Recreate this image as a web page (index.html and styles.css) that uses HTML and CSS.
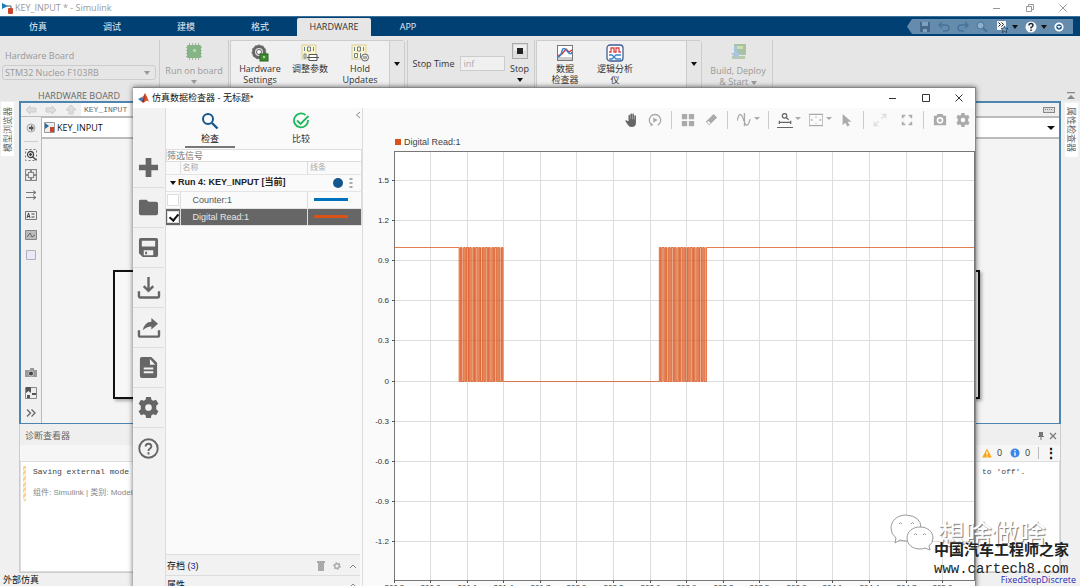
FILE: index.html
```
<!DOCTYPE html>
<html lang="zh-CN">
    <head>
        <meta charset="UTF-8" />
        <meta name="viewport" content="width=device-width, initial-scale=1.0" />
        <title>KEY_INPUT * - Simulink</title>
        <link rel="stylesheet" href="styles.css">
    </head>

    <body>
        <div class="app">
            <!-- 标题栏 -->
            <header class="titlebar">
                <svg class="logo" width="12" height="12" viewBox="0 0 12 12"><path d="M0 1l6 3-6 3z" fill="#1a7fb8" /><path d="M5 4h4v3" stroke="#555" fill="none" /><rect x="6" y="6" width="5" height="6" rx="1" fill="#c8452b" /></svg>
                <span>KEY_INPUT * - Simulink</span>
                <div class="win-btns">
                    <button aria-label="最小化"><svg width="8" height="8"><path d="M0 4.5h7" /></svg></button>
                    <button aria-label="还原"><svg width="8" height="8"><path d="M.5 2.5h5v5h-5zM2.500 2V.5h5v5H6" /></svg></button>
                    <button aria-label="关闭"><svg width="8" height="8"><path d="M.5.5l7 7M7.500.5l-7 7" /></svg></button>
                </div>
            </header>

            <nav class="tabs">
                <a href="#">仿真</a>
                <a href="#">调试</a>
                <a href="#">建模</a>
                <a href="#">格式</a>
                <a href="#" class="active">HARDWARE</a>
                <a href="#">APP</a>
                <div class="quick">
                    <svg width="12" height="12" viewBox="0 0 12 12"><path d="M1 1h10v10H1z" fill="#45698c" /><path d="M3 1h6v4H3zM4 8h4v3H4z" fill="#7f9fbb" /></svg>
                    <svg width="12" height="12" viewBox="0 0 12 12"><path d="M4 1L1 4l3 3M1 4h7q3 0 3 3t-4 3H5" fill="none" stroke="#46739c" stroke-width="1.500" /></svg>
                    <svg width="12" height="12" viewBox="0 0 12 12"><path d="M8 1l3 3-3 3M11 4H4Q1 4 1 7t4 3h2" fill="none" stroke="#46739c" stroke-width="1.500" /></svg>
                    <svg width="12" height="12" viewBox="0 0 12 12"><circle cx="4.500" cy="4.500" r="3.500" fill="#8fb0cb" stroke="#46739c" /><path d="M7 7l4 4" stroke="#46739c" stroke-width="2" /></svg>
                    <span class="drop"><svg width="12" height="12" viewBox="0 0 12 12"><path d="M1 0h9v9H1z" fill="#f2f2f2" /><path d="M2.500 1.500l2 2-2 2M5.500 1.500l2 2-2 2" fill="none" stroke="#222" /><path d="M8.500 5l1 2.200 2.500.3-1.800 1.600.5 2.400-2.200-1.200-2.200 1.200.5-2.400L5 7.500l2.500-.3z" fill="#6f9cc4" stroke="#123" stroke-width=".6" /></svg><i class="caret"></i></span>
                    <span class="drop"><svg width="12" height="12" viewBox="0 0 12 12"><circle cx="6" cy="6" r="5.500" fill="#f4f6f8" /><path d="M4 4.500Q4 2.500 6 2.500t2 2Q8 5.500 6 6.500V7.500M6 8.500v1.500" fill="none" stroke="#123" stroke-width="1.400" /></svg><i class="caret"></i></span>
                    <svg width="10" height="10" viewBox="0 0 10 10"><circle cx="5" cy="5" r="3.700" fill="#1b5d92" stroke="#fff" stroke-width="1.800" /><path d="M3 4h4L5 6.500z" fill="#fff" /></svg>
                </div>
            </nav>

            <!-- 工具条 -->
            <section class="strip">
                <div class="board">
                    <label for="board">Hardware Board</label>
                    <div class="select-wrap">
                        <select id="board" disabled><option>STM32 Nucleo F103RB</option></select>
                        <i class="caret"></i>
                    </div>
                    <h4>HARDWARE BOARD</h4>
                </div>
                <div class="group run">
                    <button class="tool" disabled>
                        <svg width="18" height="18" viewBox="0 0 18 18"><path d="M1 4.500h16M1 7.500h16M1 10.500h16M1 13.500h16M4.500 0v17M7.500 0v17M10.500 0v17M13.500 0v17" stroke="#a5b6a2" /><rect x="2" y="2" width="14" height="13" rx="1" fill="#86b487" /><rect x="8" y="6" width="3" height="3" fill="#b7d6a8" /></svg>
                        <span>Run on board</span><i class="caret"></i>
                    </button>
                </div>
                <div class="gallery hw">
                    <button class="tool">
                        <svg width="18" height="18" viewBox="0 0 18 18"><circle cx="8" cy="8" r="5.500" fill="#ddd" stroke="#666" stroke-width="3" /><circle cx="8" cy="8" r="7" fill="none" stroke="#777" stroke-dasharray="2 2" /><circle cx="8" cy="8" r="2.500" fill="#fff" stroke="#666" /><rect x="9" y="10" width="8" height="7" fill="#3e8b33" stroke="#28651f" /><path d="M12 12h2v2h-2z" fill="#a9d59a" /></svg>
                        <span>Hardware<br>Settings</span>
                    </button>
                    <button class="tool">
                        <svg width="18" height="18" viewBox="0 0 18 18"><rect x="1" y="1" width="14" height="14" fill="#fcf5c9" stroke="#d9cf9a" /><path d="M3.500 3v4M6.500 3h3v4h-3zM12.500 3v4M3 10h2v4H3z" fill="none" stroke="#6b7f96" /><path d="M6 13.500h12M8 10.500h8v6H8z" fill="#fff" stroke="#555" /></svg>
                        <span>调整参数</span>
                    </button>
                    <button class="tool">
                        <svg width="18" height="18" viewBox="0 0 18 18"><rect x="1" y="1" width="14" height="14" fill="#fcf5c9" stroke="#d9cf9a" /><path d="M3.500 3v4M6.500 3h3v4h-3zM12.500 3v4M3.500 9.500h3v4h-3zM9.500 9v5" fill="none" stroke="#6b7f96" /><circle cx="14" cy="13.500" r="3.500" fill="#eee" stroke="#666" /><path d="M13 12v3M15 12v3" stroke="#666" /></svg>
                        <span>Hold<br>Updates</span>
                    </button>
                    <button class="more" aria-label="更多"><i class="caret"></i></button>
                </div>
                <div class="group stop">
                    <label for="stopTime">Stop Time</label>
                    <input id="stopTime" type="text" value="inf" disabled>
                    <button class="tool">
                        <svg width="16" height="16" viewBox="0 0 16 16"><rect x=".5" y=".5" width="15" height="15" fill="#ddd" stroke="#aaa" /><rect x="2" y="2" width="12" height="6" fill="#eee" /><rect x="5" y="5" width="6" height="6" fill="#222" /></svg>
                        <span>Stop</span><i class="caret"></i>
                    </button>
                </div>
                <div class="gallery review">
                    <button class="tool">
                        <svg width="18" height="18" viewBox="0 0 18 18"><rect x="1.500" y="1.500" width="15" height="15" fill="#fff" stroke="#777" /><path d="M2 13h14v3H2z" fill="#ccc" /><path d="M2 12l4-2 4-5 3 3 3-2" fill="none" stroke="#d33" stroke-width="1.500" /><path d="M2 13q3-1 4-6t5 0 5 1" fill="none" stroke="#3a86c8" stroke-width="1.500" /></svg>
                        <span>数据<br>检查器</span>
                    </button>
                    <button class="tool">
                        <svg width="18" height="18" viewBox="0 0 18 18"><rect x="1" y="1" width="16" height="16" rx="3" fill="#fff" stroke="#3f5f95" stroke-width="1.300" /><path d="M3 8h2V4h3v4h2V4h3v4h2" fill="none" stroke="#e04343" stroke-width="1.300" /><path d="M3 11h3l4 4h5M3 15h3l4-4h5" fill="none" stroke="#3a86c8" stroke-width="1.300" /></svg>
                        <span>逻辑分析<br>仪</span>
                    </button>
                    <button class="more" aria-label="更多"><i class="caret"></i></button>
                </div>
                <div class="group deploy">
                    <button class="tool" disabled>
                        <svg width="18" height="18" viewBox="0 0 18 18"><rect x="5" y="1" width="12" height="11" rx="1" fill="#a5c3a2" /><path d="M8 3h6v3H8z" fill="#cfdcae" /><path d="M3 13h13v3H3z" fill="#b9c9ac" /><path d="M8 3H5v7H2l5 6 5-6H8z" fill="#a9c4dc" /></svg>
                        <span>Build, Deploy<br>&amp; Start <i class="caret"></i></span>
                    </button>
                </div>
                <svg class="collapse" width="10" height="8" viewBox="0 0 10 8"><path d="M1 .5h8" stroke="#888" stroke-width="1.500" /><path d="M1 7h8L5 3z" fill="#888" /></svg>
            </section>

            <!-- 编辑器 -->
            <main class="work">
                <aside class="side-tab left"><button>模型浏览器</button></aside>
                <div class="center">
                    <section class="editor">
                        <div class="nav-row">
                            <svg width="12" height="10" viewBox="0 0 12 10"><path d="M5 1v2h6v4H5v2L1 5z" /></svg>
                            <svg width="12" height="10" viewBox="0 0 12 10"><path d="M7 1v2H1v4h6v2l4-4z" /></svg>
                            <svg width="12" height="10" viewBox="0 0 12 10"><path d="M6 0l5 5H8v4H4V5H1z" /></svg>
                            <a href="#">KEY_INPUT</a>
                            <svg class="keyboard" width="12" height="8" viewBox="0 0 12 8"><rect x=".5" y="1.500" width="11" height="5" /><path d="M2 3.500h8" stroke-dasharray="1 1" /></svg>
                        </div>
                        <div class="editor-body">
                            <div class="palette">
                                <svg width="12" height="12" viewBox="0 0 12 12"><circle cx="6" cy="6" r="4" fill="#ddd" stroke="#aaa" /><path d="M4 5h2V3l3 3-3 3V7H4z" fill="#555" /></svg>
                                <hr>
                                <svg width="12" height="12" viewBox="0 0 12 12"><path d="M.5.5h11v11H.5z" fill="none" stroke="#777" stroke-dasharray="2 2" /><circle cx="5.500" cy="5.500" r="3" fill="#fff" stroke="#444" stroke-width="1.300" /><path d="M4 5.500h3M5.500 4v3M8 8l3 3" stroke="#444" stroke-width="1.300" /></svg>
                                <svg width="12" height="12" viewBox="0 0 12 12"><path d="M0 0h12v12H0z" fill="#888" /><path d="M2 5V2h3M7 2h3v3M10 7v3H7M5 10H2V7" fill="none" stroke="#fff" stroke-width="1.500" /><path d="M4 4h4v4H4z" fill="#eee" /></svg>
                                <svg width="12" height="12" viewBox="0 0 12 12"><path d="M1 3.500h10M1 8.500h10M8 1.500l3 2-3 2M8 6.500l3 2-3 2" fill="none" stroke="#777" /></svg>
                                <svg width="12" height="12" viewBox="0 0 12 12"><path d="M.5 2.500h11v8H.5z" fill="#eee" stroke="#777" /><path d="M2 9l1.500-5L5 9M2.500 7.500h2M6.500 5h3M6.500 8h3" fill="none" stroke="#444" /></svg>
                                <svg width="12" height="12" viewBox="0 0 12 12"><path d="M.5 1.500h11v9H.5z" fill="#bbb" stroke="#888" /><path d="M2 8l3-4 2 4 3-2" fill="none" stroke="#666" /></svg>
                                <svg width="12" height="12" viewBox="0 0 12 12"><path d="M1.500 1.500h9v9h-9z" fill="#e9e9f8" stroke="#b0b0bd" /></svg>
                                <div class="spacer"></div>
                                <svg width="12" height="12" viewBox="0 0 12 12"><path d="M0 3h5V1h4v2h3v7H0z" fill="#999" /><circle cx="6" cy="6.500" r="2.500" fill="#444" stroke="#ccc" /></svg>
                                <svg width="12" height="12" viewBox="0 0 12 12"><path d="M.5.5h11v11H.5z" fill="#eee" stroke="#888" /><path d="M1 0h5v6L3.500 4 1 6zM7 6h4v2H7zM2 8h3v3H2z" fill="#555" /></svg>
                                <svg width="12" height="12" viewBox="0 0 12 12"><path d="M2 2.500l3.500 3.500L2 9.500M6.500 2.500L10 6 6.500 9.500" fill="none" stroke="#666" stroke-width="1.300" /></svg>
                            </div>
                            <div class="model">
                                <div class="crumb">
                                    <svg width="11" height="11" viewBox="0 0 11 11"><path d="M.5.5h10v10H.5z" fill="#eee" stroke="#999" /><path d="M1 1l4 3-4 3z" fill="#1a6fae" /><path d="M6 5h4v5H6z" fill="#c8452b" /></svg>
                                    <span>KEY_INPUT</span>
                                    <i class="caret"></i>
                                </div>
                                <div class="canvas"><div class="block"></div></div>
                            </div>
                        </div>
                    </section>
                    <section class="diag">
                        <div class="diag-head">
                            <span>诊断查看器</span>
                            <svg width="8" height="8" viewBox="0 0 8 8"><path d="M2 0h4v4H2zM1 4h6v1H1zM3.500 5h1v3h-1z" fill="#777" /></svg>
                            <svg width="8" height="8" viewBox="0 0 8 8"><path d="M1 1l6 6M7 1L1 7" stroke="#777" stroke-width="1.200" /></svg>
                        </div>
                        <div class="diag-count">
                            <svg width="10" height="10" viewBox="0 0 10 10"><path d="M5 .5L9.800 9.500H.2z" fill="#f9a51a" /><path d="M5 3.500v3M5 7.500v1" stroke="#fff" stroke-width="1.300" /></svg><span>0</span>
                            <svg width="10" height="10" viewBox="0 0 10 10"><circle cx="5" cy="5" r="4.500" fill="#3b86ea" /><path d="M5 2v1.200M5 4.200v3.500" stroke="#fff" stroke-width="1.400" /></svg><span>0</span>
                            <hr>
                            <b>&#8942;</b>
                        </div>
                        <div class="diag-box">
                            <p class="msg"><span>Saving external mode s</span><span>to 'off'.</span></p>
                            <p class="src">组件: Simulink | 类别: Model</p>
                        </div>
                    </section>
                </div>
                <aside class="side-tab right"><button>属性检查器</button></aside>
            </main>

            <footer class="status"><span>外部仿真</span><a href="#">FixedStepDiscrete</a></footer>
        </div>

        <!-- 仿真数据检查器 窗口 -->
        <div class="dialog">
            <div class="dlg-title">
                <svg width="12" height="10" viewBox="0 0 12 10"><path d="M0 6l4-2 2 3-2 2z" fill="#3d7bb5" /><path d="M4 4q2-1 3-4 2 3 4 9-2-2-3-1T5 10L4 9l2-2z" fill="#d4512a" /><path d="M7 0q-1 5-3 9l2 0z" fill="#8a2c1c" /></svg>
                <span>仿真数据检查器 - 无标题*</span>
                <div class="win-btns dark">
                    <button aria-label="最小化"><svg width="8" height="8"><path d="M0 4.500h7" /></svg></button>
                    <button aria-label="最大化"><svg width="8" height="8"><path d="M.5.5h7v7h-7z" /></svg></button>
                    <button aria-label="关闭"><svg width="8" height="8"><path d="M.5.5l7 7M7.500.5l-7 7" /></svg></button>
                </div>
            </div>
            <div class="dlg-body">
                <div class="rail">
                    <button aria-label="新建"><svg viewBox="0 0 22 22"><path d="M8 1h6v7h7v6h-7v7H8v-7H1V8h7z" /></svg></button>
                    <button aria-label="打开"><svg viewBox="0 0 22 22"><path d="M2 3h7l2 2h8q2 0 2 2v10q0 2-2 2H3q-2 0-2-2V5q0-2 1-2z" /></svg></button>
                    <button aria-label="保存"><svg viewBox="0 0 22 22"><path d="M3 1h16q2 0 2 2v16q0 2-2 2H5l-4-4V3q0-2 2-2zM4 4v6h14V4zM6 14v5h10v-5zM7.500 15.500h2v2.500h-2z" fill-rule="evenodd" /></svg></button>
                    <button aria-label="导入"><svg viewBox="0 0 22 22"><path d="M11 0v14M6 9.500l5 5 5-5M1 15v5q0 1.500 1.500 1.500h18q1.500 0 1.500-1.500v-5" class="line" /></svg></button>
                    <button aria-label="导出"><svg viewBox="0 0 22 22"><path d="M1 14v5q0 1.500 1.500 1.500h18q1.500 0 1.500-1.500v-5" class="line" /><path d="M5 14Q7 5 14 5V1l7 6-7 6V10Q9 10 5 14z" /></svg></button>
                    <button aria-label="报告"><svg viewBox="0 0 22 22"><path d="M4 0h10l6 6v14q0 2-2 2H4q-2 0-2-2V2q0-2 2-2zM12.500 2v6H18zM6 11v2h10v-2zM6 15v2h10v-2z" fill-rule="evenodd" /></svg></button>
                    <button aria-label="设置"><svg viewBox="0 0 22 22"><path d="M8.500 0h5l.6 3 1.900 1 2.900-1.100 2.500 4.300-2.300 2v3.600l2.300 2-2.500 4.300L16 18l-1.900 1-.6 3h-5l-.6-3L6 18l-2.900 1.100-2.500-4.300 2.300-2V9.200l-2.300-2 2.500-4.300L6 4l1.900-1zM11 7.500a3.500 3.500 0 1 0 0 7 3.500 3.500 0 0 0 0-7z" fill-rule="evenodd" /></svg></button>
                    <button aria-label="帮助"><svg viewBox="0 0 22 22"><circle cx="11" cy="11" r="9.700" fill="none" class="line thin" /><path d="M8 9Q8 6 11 6t3 3q0 1.500-2 2.500-1 .7-1 2M11 15v2.200" class="line thin" /></svg></button>
                </div>

                <div class="panel">
                    <div class="panel-tabs">
                        <button class="on"><svg width="18" height="18" viewBox="0 0 18 18"><circle cx="7" cy="7" r="5" fill="none" stroke="#15578c" stroke-width="2" /><path d="M11 11l5.500 5.500" stroke="#15578c" stroke-width="2.400" /></svg><span>检查</span></button>
                        <button><svg width="18" height="18" viewBox="0 0 18 18"><path d="M13.500 3a7 7 0 1 0 2.500 5" fill="none" stroke="#1cb85c" stroke-width="1.800" /><path d="M5 8.500l3.500 3.500L16.500 4" fill="none" stroke="#1cb85c" stroke-width="1.800" /></svg><span>比较</span></button>
                        <svg class="chev" width="6" height="8" viewBox="0 0 6 8"><path d="M5 1L1.500 4 5 7" fill="none" stroke="#888" /></svg>
                    </div>
                    <input class="filter" type="text" placeholder="筛选信号" aria-label="筛选信号">
                    <table class="signals">
                        <colgroup><col class="c-check"><col><col class="c-line"></colgroup>
                        <thead>
                            <tr><th></th><th>名称</th><th>线条</th></tr>
                        </thead>
                        <tbody>
                            <tr class="run-row">
                                <td colspan="3"><div><i class="caret"></i><b>Run 4: KEY_INPUT [当前]</b><i class="dot"></i><svg width="4" height="12" viewBox="0 0 4 12"><path d="M.5 1h3v2h-3zM.5 5h3v2h-3zM.5 9h3v2h-3z" fill="#aaa" /></svg></div></td>
                            </tr>
                            <tr>
                                <td><input type="checkbox" id="s1"></td>
                                <td><label for="s1">Counter:1</label></td>
                                <td><i class="swatch blue"></i></td>
                            </tr>
                            <tr class="picked">
                                <td><input type="checkbox" id="s2" checked></td>
                                <td><label for="s2">Digital Read:1</label></td>
                                <td><i class="swatch orange"></i></td>
                            </tr>
                        </tbody>
                    </table>
                    <div class="archive">
                        <span>存档 (<a href="#">3</a>)</span>
                        <svg width="8" height="10" viewBox="0 0 8 10"><path d="M0 0h8v2H0zM1 2h6v8H1z" fill="#aaa" /></svg>
                        <svg width="8" height="8" viewBox="0 0 8 8"><circle cx="4" cy="4" r="2.300" fill="none" stroke="#aaa" stroke-width="1.500" /><circle cx="4" cy="4" r="3.500" fill="none" stroke="#aaa" stroke-dasharray="1.600 2" /></svg>
                        <svg width="8" height="6" viewBox="0 0 8 6"><path d="M1 5l3-3 3 3" fill="none" stroke="#888" /></svg>
                    </div>
                    <div class="archive props">
                        <span>属性</span>
                        <svg width="8" height="6" viewBox="0 0 8 6"><path d="M1 5l3-3 3 3" fill="none" stroke="#888" /></svg>
                    </div>
                </div>

                <div class="plot">
                    <div class="plot-tools">
                        <button class="strong" aria-label="平移"><svg viewBox="0 0 16 16"><path d="M4 9V3q0-1 .8-1t.9 1v4h.4V1.500Q6 .5 7 .5t1 1V7h.4V1.500q0-1 .9-1t.9 1V7.500h.5V3.500q0-1 .9-1t.9 1V11q0 5-5 5-3 0-4.500-3L.5 9.500Q0 8.500 1 8.300t1.700.7z" /></svg></button>
                        <button aria-label="重放"><svg viewBox="0 0 16 16"><path d="M5 14A6.500 6.500 0 1 1 11 14" class="line" /><path d="M3 11l3 2.500L3 15.500zM6 5l5 3-5 3z" /></svg></button>
                        <hr>
                        <button aria-label="布局"><svg viewBox="0 0 16 16"><path d="M1 1h6v6H1zM9 1h6v6H9zM1 9h6v6H1zM9 9h6v6H9z" /></svg></button>
                        <button aria-label="清除"><svg viewBox="0 0 16 16"><path d="M11 1l4 4-9 9-4-4zM5 9l-1.500 1.500L6 13l1.500-1.500z" fill-rule="evenodd" /></svg></button>
                        <hr>
                        <button class="menu" aria-label="游标"><svg viewBox="0 0 16 16"><path d="M0 9C2 1 4 0 6 4s3 10 5 10 3-3 4-7M8.500 0v15" class="line" /></svg><i class="caret"></i></button>
                        <hr>
                        <button class="menu used" aria-label="缩放"><svg viewBox="0 0 16 16"><circle cx="7.500" cy="3.500" r="2.800" class="line" /><path d="M9.500 5.500l3 3M1 11.500h14M1 9.500v4M15 9.500v4" class="line" /></svg><i class="caret"></i></button>
                        <button class="menu" aria-label="适应视图"><svg viewBox="0 0 16 16"><path d="M0 1.500h16v13H0z" class="line" /><path d="M2 8h2M12 8h2M8 4v1M8 11v1" class="line" /></svg><i class="caret"></i></button>
                        <button aria-label="选择"><svg viewBox="0 0 16 16"><path d="M3 1v13l3-3 2.500 4.500L11 14 8.800 10H13z" /></svg></button>
                        <hr>
                        <button class="pale" aria-label="展开"><svg viewBox="0 0 16 16"><path d="M9.500 6.500L14 2M10 1.500h4.500V6M6.500 9.500L2 14M1.500 10v4.500H6" class="line" /></svg></button>
                        <button aria-label="全屏"><svg viewBox="0 0 16 16"><path d="M3 6V3h3M10 3h3v3M13 10v3h-3M6 13H3v-3" class="line thick" /></svg></button>
                        <hr>
                        <button aria-label="快照"><svg viewBox="0 0 16 16"><path d="M5 1h6l1 2h3v11H1V3h3zM8 4.500a3.900 3.900 0 1 0 0 7.800A3.900 3.900 0 0 0 8 4.500zM8 6.500a1.900 1.900 0 1 1 0 3.800A1.900 1.900 0 0 1 8 6.500z" fill-rule="evenodd" /></svg></button>
                        <button aria-label="首选项"><svg viewBox="0 0 22 22"><path d="M8.500 0h5l.6 3 1.900 1 2.900-1.100 2.500 4.300-2.300 2v3.600l2.300 2-2.500 4.300L16 18l-1.900 1-.6 3h-5l-.6-3L6 18l-2.900 1.100-2.500-4.300 2.300-2V9.200l-2.300-2 2.500-4.300L6 4l1.900-1zM11 7.500a3.500 3.500 0 1 0 0 7 3.500 3.500 0 0 0 0-7z" fill-rule="evenodd" /></svg></button>
                    </div>
                    <div class="legend"><i></i>Digital Read:1</div>
                    <svg id="chart" class="chart"></svg>
                </div>
            </div>
        </div>

        <!-- 水印 -->
        <div class="wechat">
            <svg width="44" height="38" viewBox="0 0 44 38"><path d="M16 1C7 1 1 7 1 14q0 6 5 10l-1 5 5-3q3 1 7 1 14-1 14-13Q31 2 16 1z" /><path d="M30 13c-8 0-13 5-13 11s5 11 13 11q3 0 5-1l5 2-1-4q4-3 4-8c0-6-5-11-13-11z" /><path d="M9 10q1.500-3 3 0M21 10q1.500-3 3 0M24 21q1.500-3 3 0M33 21q1.500-3 3 0" /></svg>
            <span>想啥做啥</span>
        </div>
        <div class="site"><strong>中国汽车工程师之家</strong><span>www.cartech8.com</span></div>

        <script src="script.js"></script>
    </body>
</html>
```
FILE: styles.css
```
* {
    box-sizing: border-box;
}

html,
body {
    height: 100%;
    overflow: hidden;
}

body,
p,
h4,
hr {
    margin: 0;
    padding: 0;
}

body {
    position: relative;
    color: #333;
    background: #f0f0f0;
    font: 9px/12px "Open Sans", "Noto Sans CJK SC", sans-serif;
}

button,
input,
select {
    margin: 0;
    padding: 0;
    border: 0;
    background: none;
    color: inherit;
    font: inherit;
}

a {
    color: inherit;
    text-decoration: none;
}

svg {
    display: block;
    flex: none;
}

hr {
    border: 0;
}

/* 下拉小三角 */
.caret {
    flex: none;
    display: inline-block;
    border: 3px solid transparent;
    border-top: 4px solid #111;
    border-bottom: 0;
}

.app {
    display: flex;
    flex-direction: column;
    height: 100%;
}

/* 标题栏 */
.titlebar {
    display: flex;
    align-items: center;
    height: 16px;
    padding: 0 1px 0 2px;
    gap: 1px;
    background: #fff;
    color: #999;
}

.win-btns {
    display: flex;
    margin-left: auto;
}

.win-btns button {
    display: flex;
    justify-content: center;
    width: 33px;
}

.win-btns svg {
    fill: none;
    stroke: #999;
}

.win-btns.dark svg {
    stroke: #333;
}

.tabs {
    display: flex;
    height: 20px;
    padding: 0 7px 0 1px;
    background: #004073;
    border-top: 1px solid #3c7199;
    color: #e4edf5;
}

.tabs a {
    width: 74px;
    padding-top: 4px;
    text-align: center;
}

.tabs .active {
    margin-top: 1px;
    padding-top: 3px;
    border-radius: 2px 2px 0 0;
    background: #e6e6e6;
    color: #333;
}

.quick {
    display: flex;
    align-items: center;
    justify-content: space-between;
    width: 166px;
    height: 15px;
    margin: 2px 0 0 auto;
    padding: 0 9px 0 12px;
    background: #668cad;
    clip-path: polygon(5px 0, 100% 0, 100% 100%, 5px 100%, 0 50%);
}

.drop {
    display: flex;
    align-items: center;
    gap: 4px;
}

/* 工具条 */
.strip {
    display: flex;
    height: 65px;
    padding-top: 4px;
    background: #e6e6e6;
}

.board {
    width: 160px;
    padding: 10px 3px 0 2px;
    border-right: 1px solid #ccc;
    color: #999;
}

.board label {
    display: block;
    padding-left: 3px;
}

.select-wrap {
    display: flex;
    align-items: center;
    height: 15px;
    margin-top: 3px;
    padding-right: 5px;
    border: 1px solid #ccc;
    border-radius: 3px;
}

.select-wrap select {
    flex: 1;
    appearance: none;
    padding-left: 2px;
    opacity: 1;
}

.select-wrap .caret,
.run .caret,
.deploy .caret {
    border-top-color: #999;
}

.board h4 {
    margin-top: 10px;
    color: #666;
    font-weight: normal;
    text-align: center;
}

.tool {
    display: flex;
    flex-direction: column;
    align-items: center;
    gap: 1px;
    line-height: 11px;
}

.group {
    display: flex;
    align-items: flex-start;
    justify-content: center;
    padding-top: 3px;
    border-right: 1px solid #ccc;
}

.group .tool {
    gap: 4px;
}

.group.run {
    width: 69px;
    color: #999;
}

.group.deploy {
    width: 69px;
    color: #999;
}

.gallery {
    display: flex;
    align-items: flex-start;
    margin: 0 2px 0 1px;
    border: 1px solid #ccc;
    border-radius: 0 3px 0 0;
    background: #f0f0f0;
}

.gallery .tool {
    width: 50px;
    padding-top: 3px;
}

.gallery .more {
    align-self: stretch;
    width: 15px;
    margin-left: auto;
    padding-bottom: 14px;
    border-left: 1px solid #ccc;
    background: #e6e6e6;
    line-height: 1px;
}

.hw {
    width: 175px;
    padding-left: 4px;
}

.review {
    width: 166px;
    padding-left: 3px;
}

.stop {
    width: 128px;
    gap: 5px;
    border-left: 1px solid #ccc;
}

.stop label {
    padding-top: 15px;
}

.stop input {
    width: 45px;
    height: 15px;
    margin-top: 13px;
    padding-left: 3px;
    border: 1px solid #ccc;
    background: #f0f0f0;
    color: #aaa;
}

.stop .tool {
    width: 20px;
}

.collapse {
    align-self: flex-end;
    margin: 0 4px 1px auto;
}

/* 主工作区 */
.work {
    flex: 1;
    display: flex;
    min-height: 0;
}

.side-tab {
    width: 19px;
    padding: 1px;
}

.side-tab button {
    width: 13px;
    height: 54px;
    background: #fff;
    color: #666;
    line-height: 13px;
    writing-mode: vertical-rl;
    text-orientation: sideways;
}

.side-tab.left button {
    transform: rotate(180deg);
}

.side-tab.right {
    padding: 2px 0 0 4px;
}

.center {
    flex: 1;
    display: flex;
    flex-direction: column;
    min-width: 0;
}

.editor {
    flex: 1;
    display: flex;
    flex-direction: column;
    border: 2px solid #4c86b0;
    border-bottom-width: 1px;
    background: #f0f0f0;
}

.nav-row {
    display: flex;
    align-items: center;
    height: 14px;
    padding: 0 4px;
    gap: 8px;
    border-bottom: 1px solid #bbb;
}

.nav-row svg {
    fill: #ddd;
    stroke: #ccc;
}

.nav-row a {
    margin-left: -4px;
    padding: 0 3px;
    background: #fff;
    color: #666;
    font: 8px/13px "Liberation Mono", monospace;
}

.nav-row .keyboard {
    margin-left: auto;
    stroke: #888;
}

.editor-body {
    flex: 1;
    display: flex;
}

.palette {
    display: flex;
    flex-direction: column;
    align-items: center;
    width: 21px;
    padding: 5px 0 4px;
    gap: 8px;
    border-right: 1px solid #bbb;
}

.palette hr {
    width: 14px;
    height: 1px;
    margin: -1px 0;
    background: #ccc;
}

.spacer {
    flex: 1;
}

.model {
    flex: 1;
    display: flex;
    flex-direction: column;
}

.crumb {
    display: flex;
    align-items: center;
    height: 22px;
    padding: 0 4px 0 2px;
    gap: 2px;
    border-top: 1px solid #bbb;
    border-bottom: 2px solid #bbb;
    background: #fff;
    color: #111;
}

.crumb .caret {
    margin-left: auto;
    border-width: 4px 4px 0;
}

.canvas {
    flex: 1;
    padding: 131px 79px 24px 71px;
    background: #f4f4f4;
}

.block {
    height: 100%;
    border: 2px solid #111;
    background: #f7f7f7;
    box-shadow: 2px 2px 3px #aaa;
}

/* 诊断查看器 */
.diag {
    display: flex;
    flex-direction: column;
    height: 149px;
    border: 1px solid #ccc;
    border-top: 0;
    background: #f6f6f6;
}

.diag-head {
    display: flex;
    align-items: center;
    height: 21px;
    padding: 2px 3px 0 5px;
    gap: 4px;
    background: #efefef;
    color: #666;
}

.diag-head span {
    margin-right: auto;
}

.diag-count {
    display: flex;
    align-items: center;
    justify-content: flex-end;
    height: 16px;
    padding-right: 8px;
    gap: 5px;
}

.diag-count span {
    width: 8px;
}

.diag-count hr {
    width: 1px;
    height: 12px;
    background: #bbb;
}

.diag-count b {
    width: 8px;
    color: #111;
    font-size: 14px;
    text-align: center;
}

.diag-box {
    position: relative;
    flex: 1;
    padding: 3px 2px;
    border: 1px solid #ddd;
    background: #fff;
}

.diag-box p {
    padding-left: 10px;
}

.diag-box::before {
    content: "";
    position: absolute;
    top: 4px;
    left: 2px;
    width: 3px;
    height: 35px;
    background: repeating-linear-gradient(-45deg, #fcd28a 0 2px, #fff0d2 2px 4px);
}

.msg {
    display: flex;
    justify-content: space-between;
    color: #444;
    font: 8px/13px "Liberation Mono", monospace;
}

.msg span:last-child {
    width: 75px;
}

.src {
    margin-top: 8px;
    color: #888;
    font: 8px/14px "Liberation Sans", "Noto Sans CJK SC", sans-serif;
}

.status {
    display: flex;
    align-items: center;
    justify-content: space-between;
    height: 13px;
    padding: 0 4px 0 3px;
    color: #111;
}

.status a {
    color: #2b2bb0;
}

/* 数据检查器窗口 */
.dialog {
    position: absolute;
    top: 87px;
    right: 104px;
    bottom: -20px;
    left: 133px;
    display: flex;
    flex-direction: column;
    border: 1px solid #888;
    border-left: 0;
    background: #fafafa;
    box-shadow: 0 0 5px rgba(0, 0, 0, .6);
    font-family: "Liberation Sans", "Noto Sans CJK SC", sans-serif;
}

.dlg-title {
    display: flex;
    align-items: center;
    height: 20px;
    padding-left: 5px;
    gap: 2px;
    background: #fff;
    color: #111;
}

.dlg-body {
    flex: 1;
    display: flex;
    min-height: 0;
}

.rail {
    width: 33px;
    padding-top: 40px;
    border-right: 1px solid #ddd;
    background: #f2f2f2;
}

.rail button {
    display: flex;
    align-items: center;
    justify-content: center;
    width: 31px;
    height: 40px;
    border-bottom: 1px solid #ddd;
}

.rail button:last-child {
    border-bottom: 0;
}

.rail svg {
    width: 21px;
    height: 21px;
    overflow: visible;
    fill: #666;
}

.rail .line {
    fill: none;
    stroke: #666;
    stroke-width: 2.5;
}

.rail .thin {
    stroke-width: 2;
}

.panel {
    display: flex;
    flex-direction: column;
    width: 197px;
    border-right: 1px solid #ddd;
}

.panel-tabs {
    display: flex;
    height: 41px;
    padding-left: 19px;
    gap: 41px;
}

.panel-tabs button {
    display: flex;
    flex-direction: column;
    align-items: center;
    width: 50px;
    height: 40px;
    padding-top: 4px;
    gap: 3px;
}

.panel-tabs .on {
    border-bottom: 2px solid #777;
    color: #111;
}

.panel-tabs .chev {
    margin: 3px -24px 0 -12px;
}

.filter {
    height: 13px;
    border: 1px solid #ddd;
    background: #fff;
}

.filter::placeholder {
    color: #777;
}

.signals {
    table-layout: fixed;
    width: 100%;
    border-collapse: collapse;
    color: #555;
}

.c-check {
    width: 14px;
}

.c-line {
    width: 54px;
}

.signals th,
.signals td {
    height: 17px;
    padding: 0;
    border-bottom: 1px solid #e4e4e4;
    border-right: 1px solid #ddd;
    line-height: 12px;
}

.signals th {
    height: 12px;
    padding-left: 2px;
    color: #aaa;
    font-size: 8px;
    font-weight: normal;
    line-height: 11px;
    text-align: left;
}

.signals label {
    padding-left: 12px;
}

.run-row div {
    display: flex;
    align-items: center;
    height: 16px;
    padding: 0 8px 0 4px;
    color: #222;
}

.run-row b {
    margin: 0 auto 0 2px;
    line-height: 15px;
}

.dot {
    width: 10px;
    height: 10px;
    margin-right: 6px;
    border-radius: 50%;
    background: #15578c;
}

.signals input {
    appearance: none;
    display: block;
    width: 12px;
    height: 12px;
    margin: 0 1px;
    border: 1px solid #ddd;
    background: #fff;
}

.signals input:checked::after {
    content: "";
    display: block;
    width: 4px;
    height: 7px;
    margin: 0 3px;
    border: solid #111;
    border-width: 0 2px 2px 0;
    transform: rotate(40deg);
}

.picked td {
    background: #666;
    color: #e8e8e8;
}

.swatch {
    display: block;
    width: 34px;
    height: 3px;
    margin-left: 6px;
}

.blue {
    background: #0072bd;
}

.orange {
    background: #d95319;
}

.archive {
    display: flex;
    align-items: center;
    height: 21px;
    margin: auto 2px 0 0;
    padding: 2px 3px 0 1px;
    gap: 8px;
    border-top: 1px solid #ddd;
    background: #f2f2f2;
    color: #111;
    font-size: 9px;
}

.archive span {
    margin-right: auto;
}

.archive a {
    color: #22c;
}

.archive.props {
    height: 30px;
    margin-top: 0;
    padding-bottom: 13px;
}

/* 绘图区 */
.plot {
    flex: 1;
    display: flex;
    flex-direction: column;
    min-width: 0;
}

.plot-tools {
    display: flex;
    align-items: center;
    justify-content: flex-end;
    height: 24px;
    padding-right: 4px;
    gap: 7px;
    color: #aaa;
}

.plot-tools button {
    display: flex;
    width: 16px;
}

.plot-tools hr {
    width: 1px;
    height: 18px;
    margin: 0 1px;
    background: #ccc;
}

.plot-tools svg {
    width: 16px;
    height: 16px;
    padding: 1px;
    fill: #aaa;
}

.plot-tools .line {
    fill: none;
    stroke: #aaa;
    stroke-width: 1.5;
}

.plot-tools .thick {
    stroke-width: 2;
}

.plot-tools .strong svg {
    fill: #666;
}

.plot-tools .menu {
    width: 24px;
    gap: 2px;
}

.plot-tools .caret {
    margin-top: 5px;
    border-top: 3px solid #aaa;
}

.plot-tools .used svg {
    border-bottom: 1px solid #666;
}

.plot-tools .used .line {
    stroke: #666;
}

.plot-tools .pale {
    width: 20px;
}

.plot-tools .pale .line {
    stroke: #ddd;
}

.legend {
    display: flex;
    align-items: center;
    height: 19px;
    padding: 1px 0 0 32px;
    gap: 3px;
    color: #444;
}

.legend i {
    width: 6px;
    height: 6px;
    background: #d95319;
}

.chart {
    flex: 1;
    width: 100%;
    min-height: 0;
}

.chart text {
    fill: #333;
    font-size: 8px;
}

.chart .frame {
    fill: #fff;
    stroke: #777;
}

.chart .grid {
    stroke: #ddd;
}

.chart .tick {
    stroke: #555;
}

.chart .signal {
    fill: none;
    stroke: #d95319;
    stroke-opacity: .75;
}

.chart .burst {
    fill: #d95319;
    fill-opacity: .45;
}

/* 水印 */
.wechat {
    position: absolute;
    right: 34px;
    bottom: 34px;
    display: flex;
    align-items: center;
    gap: 4px;
    color: #fff;
    font: 27px/36px "Noto Sans CJK SC", sans-serif;
    text-shadow: 1px 1px 1px #777;
}

.wechat svg {
    fill: #fff;
    stroke: #999;
}

.site {
    position: absolute;
    right: 11px;
    bottom: 7px;
    display: flex;
    flex-direction: column;
    color: #222;
    font: 15px/20px "Noto Sans CJK SC", sans-serif;
}

.site span {
    font: 14px/20px "Liberation Mono", monospace;
}
```
FILE: script.js
```
// 画 Digital Read:1 的波形
var chart = document.querySelector("#chart");
var ns = "http://www.w3.org/2000/svg";
var left = 31; // y轴刻度文字的宽度
var width = chart.clientWidth - left;
var height = chart.clientHeight - 25;

var tMin = 200.5;
var tMax = 205.265;
var vMax = 1.72;
var vMin = -1.495;

// 信号来回跳变的时间段
var bursts = [
    [201.034, 201.399],
    [202.676, 203.066],
];

function px(t) {
    return left + ((t - tMin) / (tMax - tMin)) * width;
}

function py(v) {
    return ((vMax - v) / (vMax - vMin)) * height;
}

function add(name, attrs, text) {
    var el = document.createElementNS(ns, name);
    for (var key in attrs) {
        el.setAttribute(key, attrs[key]);
    }
    if (text) {
        el.textContent = text;
    }
    chart.appendChild(el);
}

function draw() {
    var i, x, y;
    add("rect", { class: "frame", x: left + 0.5, y: 0.5, width: width - 1, height: height });

    // 竖线和时间刻度
    for (i = 0; i <= 15; i++) {
        x = Math.floor(px(tMin + i * 0.3)) + 0.5;
        if (i > 0) {
            add("path", { class: "grid", d: "M" + x + " 1V" + height });
        }
        add("path", { class: "tick", d: "M" + x + " " + height + "v3" });
        add("text", { x: x, y: height + 10, "text-anchor": "middle" }, (tMin + i * 0.3).toFixed(1));
    }

    // 横线和数值刻度
    for (i = 5; i >= -4; i--) {
        y = Math.round(py(i * 0.3)) + 0.5;
        add("path", { class: "grid", d: "M" + (left + 1) + " " + y + "H" + (left + width - 1) });
        add("path", { class: "tick", d: "M" + (left - 2) + " " + y + "h3" });
        add("text", { x: left - 5, y: y + 2.5, "text-anchor": "end" }, i == 0 ? "0" : (i * 0.3).toFixed(1));
    }

    // 波形
    var high = Math.round(py(1)) + 0.5;
    var low = Math.round(py(0)) + 0.5;
    var d = "M" + left + " " + high;
    var level = high;
    bursts.forEach(function (b, n) {
        var start = px(b[0]);
        var end = px(b[1]);
        add("rect", { class: "burst", x: start, y: high, width: end - start, height: low - high });
        // 跳变的间隔不均匀
        var k = 0;
        for (x = start; x < end; x += k % 3 == 0 ? 2.1 : 1.3) {
            level = level == high ? low : high;
            d += "H" + x.toFixed(2) + "V" + level;
            k++;
        }
        // 每一段结束后停在固定的电平上
        level = n == 0 ? low : high;
        d += "H" + end.toFixed(2) + "V" + level;
    });
    d += "H" + (left + width - 1);
    add("path", { class: "signal", d: d });
}

draw();
```
